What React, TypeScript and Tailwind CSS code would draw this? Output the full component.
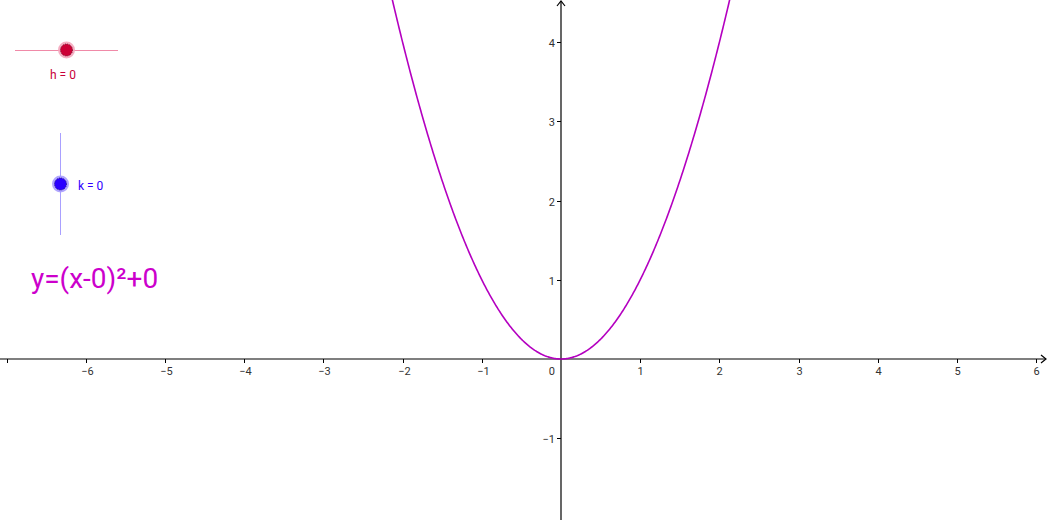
const OX = 561;
const OY = 359;
const U = 79.2;

const xTicks = [-7, -6, -5, -4, -3, -2, -1, 1, 2, 3, 4, 5, 6];
const yTicks = [-1, 1, 2, 3, 4];

function parabolaPath() {
  const pts: string[] = [];
  for (let i = 0; i <= 400; i++) {
    const x = -2.2 + (4.4 * i) / 400;
    const px = OX + x * U;
    const py = OY - x * x * U;
    pts.push(`${i === 0 ? "M" : "L"}${px.toFixed(2)} ${py.toFixed(2)}`);
  }
  return pts.join(" ");
}

function fmt(n: number) {
  return n < 0 ? `\u2212${-n}` : `${n}`;
}

export default function App() {
  return (
    <div
      className="relative w-[1048px] h-[520px] bg-white overflow-hidden"
      style={{ fontFamily: "Roboto, 'Noto Sans', sans-serif" }}
    >
      <svg className="absolute inset-0" width={1048} height={520}>
        {/* axes */}
        <line x1={0} y1={OY} x2={1046} y2={OY} stroke="#000" strokeWidth={1.2} />
        <line x1={OX} y1={1} x2={OX} y2={520} stroke="#000" strokeWidth={1.2} />
        <path d="M1041 355 L1046 359 L1041 363" fill="none" stroke="#000" strokeWidth={1.2} />
        <path d="M557 6 L561 1 L565 6" fill="none" stroke="#000" strokeWidth={1.2} />

        {xTicks.map((t) => {
          const x = Math.round(OX + t * U) + 0.5;
          return (
            <g key={t}>
              <line x1={x} y1={OY} x2={x} y2={OY + 4} stroke="#000" strokeWidth={1} />
              {t !== -7 && (
                <text x={x + (t < 0 ? 1 : 0)} y={OY + 16} fontSize={11} fill="#333" textAnchor="middle">
                  {fmt(t)}
                </text>
              )}
            </g>
          );
        })}
        <text x={OX - 6} y={OY + 16} fontSize={11} fill="#333" textAnchor="end">
          0
        </text>

        {yTicks.map((t) => {
          const y = Math.round(OY - t * U) + 0.5;
          return (
            <g key={t}>
              <line x1={OX - 4} y1={y} x2={OX} y2={y} stroke="#000" strokeWidth={1} />
              <text x={OX - 6} y={y + 4} fontSize={11} fill="#333" textAnchor="end">
                {fmt(t)}
              </text>
            </g>
          );
        })}

        {/* y = x^2 */}
        <path d={parabolaPath()} fill="none" stroke="#b400c0" strokeWidth={1.6} />

        {/* slider h */}
        <line x1={15} y1={50.5} x2={118} y2={50.5} stroke="#f08aa8" strokeWidth={1} />
        <circle cx={66.5} cy={50} r={8.5} fill="#f4a6bd" opacity={0.9} />
        <circle cx={66.5} cy={50} r={6} fill="#cc0036" stroke="#5a0018" strokeWidth={0.8} strokeDasharray="1 1" />

        {/* slider k */}
        <line x1={60.5} y1={133} x2={60.5} y2={235} stroke="#a9a0ff" strokeWidth={1} />
        <circle cx={60.5} cy={184} r={8.5} fill="#a89cff" opacity={0.9} />
        <circle cx={60.5} cy={184} r={6} fill="#2a00ff" stroke="#10006a" strokeWidth={0.8} strokeDasharray="1 1" />
      </svg>

      <div className="absolute left-[50px] top-[69px] text-[12px] leading-none text-[#c8003a]">h = 0</div>
      <div className="absolute left-[78px] top-[180px] text-[12px] leading-none text-[#3200ff]">k = 0</div>
      <div className="absolute left-[31px] top-[265px] text-[28px] leading-none text-[#cc00cc]">y=(x-0)²+0</div>
    </div>
  );
}
